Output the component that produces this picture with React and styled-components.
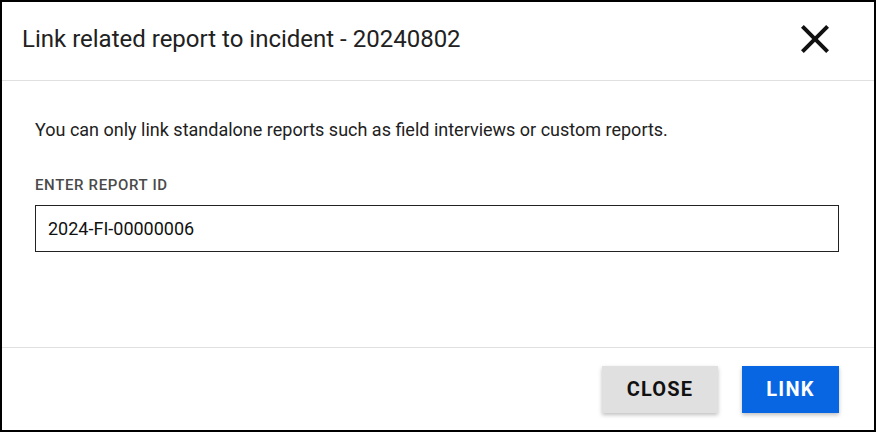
import React, { useState } from 'react';
import styled, { createGlobalStyle } from 'styled-components';

const GlobalStyle = createGlobalStyle`
  html, body {
    margin: 0;
    padding: 0;
    background: #fff;
  }
  * {
    box-sizing: border-box;
  }
`;

const Dialog = styled.div`
  width: 876px;
  height: 432px;
  border: 2px solid #000;
  background: #fff;
  display: flex;
  flex-direction: column;
  font-family: Roboto, "Liberation Sans", sans-serif;
  color: #212121;
`;

const Header = styled.div`
  height: 79px;
  flex: none;
  display: flex;
  align-items: center;
  justify-content: space-between;
  padding: 0 20px 4px 20px;
  border-bottom: 1px solid #e0e0e0;
`;

const Title = styled.h2`
  margin: 0;
  font-size: 24px;
  font-weight: 400;
  color: #212121;
`;

const IconButton = styled.button`
  width: 48px;
  height: 48px;
  margin-right: 15px;
  padding: 0;
  border: none;
  background: transparent;
  display: flex;
  align-items: center;
  justify-content: center;
  cursor: pointer;
`;

const Body = styled.div`
  flex: 1;
  padding: 37px 35px 0 33px;
`;

const Note = styled.p`
  margin: 0 0 34px;
  font-size: 18px;
  line-height: 24px;
  color: #212121;
`;

const Label = styled.label`
  display: block;
  margin-bottom: 11px;
  font-size: 15px;
  font-weight: 500;
  letter-spacing: 0.65px;
  color: #4a4a4a;
  text-transform: uppercase;
`;

const Input = styled.input`
  width: 100%;
  height: 47px;
  padding: 0 12px;
  border: 1px solid #222;
  border-radius: 0;
  font-family: Roboto, "Liberation Sans", sans-serif;
  font-size: 18px;
  color: #111;
  outline: none;
`;

const Footer = styled.div`
  height: 83px;
  flex: none;
  display: flex;
  align-items: center;
  justify-content: flex-end;
  gap: 24px;
  padding: 0 35px 0 0;
  border-top: 1px solid #e0e0e0;
`;

const Button = styled.button`
  height: 47px;
  min-width: ${p => p.$primary ? '97px' : '116px'};
  padding: 0 22px;
  border: none;
  border-radius: 0;
  font-family: Roboto, "Liberation Sans", sans-serif;
  font-size: 20px;
  font-weight: 700;
  letter-spacing: 1.2px;
  text-transform: uppercase;
  background: ${p => p.$primary ? '#0866e2' : '#e0e0e0'};
  color: ${p => p.$primary ? '#fff' : '#111'};
  box-shadow: 0 2px 4px rgba(0, 0, 0, 0.25);
  cursor: pointer;
`;

const CloseIcon = () => (
  <svg width="48" height="48" viewBox="0 0 24 24" fill="#111">
    <path d="M19 6.41 17.59 5 12 10.59 6.41 5 5 6.41 10.59 12 5 17.59 6.41 19 12 13.41 17.59 19 19 17.59 13.41 12z" />
  </svg>
);

export default function App() {
  const [reportId, setReportId] = useState('2024-FI-00000006');

  return (
    <>
      <GlobalStyle />
      <Dialog>
        <Header>
          <Title>Link related report to incident - 20240802</Title>
          <IconButton aria-label="close"><CloseIcon /></IconButton>
        </Header>
        <Body>
          <Note>You can only link standalone reports such as field interviews or custom reports.</Note>
          <Label htmlFor="reportId">Enter report ID</Label>
          <Input id="reportId" value={reportId} onChange={e => setReportId(e.target.value)} />
        </Body>
        <Footer>
          <Button>Close</Button>
          <Button $primary>Link</Button>
        </Footer>
      </Dialog>
    </>
  );
}
